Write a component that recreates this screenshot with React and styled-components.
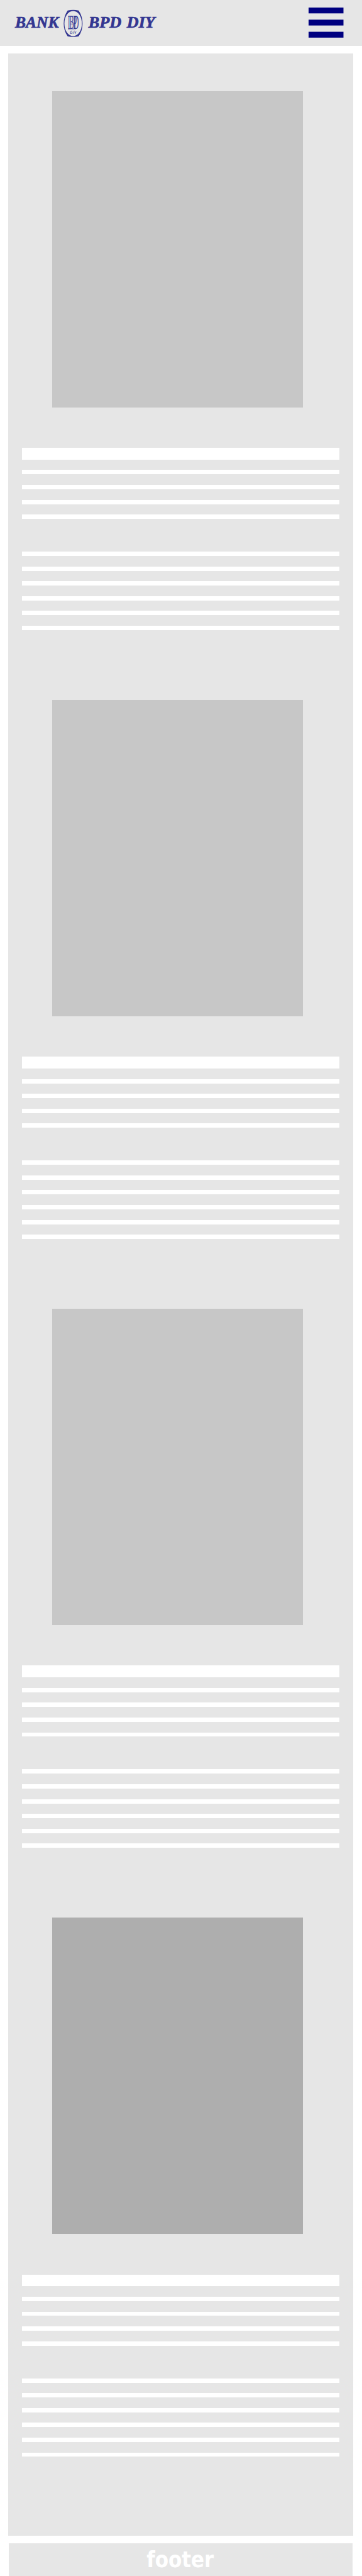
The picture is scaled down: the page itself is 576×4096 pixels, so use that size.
import React from "react";
import styled, { createGlobalStyle } from "styled-components";

const GlobalStyle = createGlobalStyle`
  * { box-sizing: border-box; }
  body { margin: 0; background: #fff; }
`;

const Page = styled.div`
  width: 576px;
  height: 4096px;
  display: flex;
  flex-direction: column;
  overflow: hidden;
`;

const Header = styled.header`
  flex: none;
  height: 72.5px;
  padding-right: 29.5px;
  display: flex;
  align-items: center;
  justify-content: space-between;
  background: #e6e6e6;
`;

const LogoSvg = styled.svg`
  display: block;
  width: 260.5px;
  height: 72.5px;
`;

const MenuButton = styled.button`
  border: 0;
  padding: 0;
  background: none;
`;

const MenuSvg = styled.svg`
  display: block;
  width: 55.5px;
  height: 48px;
`;

const Content = styled.main`
  flex: none;
  height: 3947px;
  margin: 12.5px 14px 0 13px;
  padding: 59.9px 22px 0 22.4px;
  background: #e6e6e6;
`;

const Article = styled.article`
  height: 968.2px;
`;

const Picture = styled.div`
  width: 399px;
  height: 502.9px;
  margin-left: 47.2px;
  background: ${({ $tone }) => $tone};
`;

const Title = styled.div`
  height: 18.8px;
  margin-top: 64.3px;
  background: #fff;
`;

const Paragraph = styled.div`
  display: flex;
  flex-direction: column;
  gap: 16.75px;
  margin-top: ${({ $space }) => $space}px;
`;

const Line = styled.div`
  height: 6.85px;
  background: #fff;
`;

const Footer = styled.footer`
  flex: 1;
  margin: 11.5px 15px 0 13.6px;
  display: flex;
  justify-content: center;
  background: #e6e6e6;
`;

const FooterLabel = styled.span`
  font: 700 36px/52px "DejaVu Sans", sans-serif;
  color: #fff;
  transform: translateX(-0.5px) scaleX(0.86);
`;

function Logo() {
  const word = {
    fontFamily: '"Liberation Serif", serif',
    fontWeight: 700,
    fontStyle: "italic",
    fontSize: 44.5,
    lengthAdjust: "spacingAndGlyphs",
    stroke: "#333691",
    strokeWidth: 1.3,
  };
  const mono = { fontFamily: '"Liberation Serif", serif', fontSize: 55 };
  return (
    <LogoSvg viewBox="0 0 460 128" fill="#333691" role="img" aria-label="Bank BPD DIY">
      <text x="42.5" y="78.5" textLength="122.5" {...word}>BANK</text>
      <path
        fillRule="evenodd"
        d="M190 29.5Q205.500 26.500 221 29.500Q232 46 232 66Q232 86 221 102Q205.500 105 190 102Q179 86 179 66Q179 46 190 29.500ZM205.500 31C191.500 31 181 46.500 181 66C181 85.500 191.500 101 205.500 101C219.500 101 230 85.500 230 66C230 46.500 219.500 31 205.500 31Z"
      />
      <g {...mono}>
        <text transform="translate(190.500 82) scale(.33 1)">I</text>
        <text transform="translate(195.500 82) scale(.32 1)">B</text>
        <text transform="translate(205.500 82) scale(.32 1)">P</text>
        <text transform="translate(207 82) scale(.36 1)">D</text>
      </g>
      <path
        fill="none"
        stroke="#333691"
        strokeWidth="1"
        d="M191 46q4 2 8 0t8 0t7 0M191 82.500q4-1 7 1t7 0M205 83.500q4 2 8-0.500M197 67.500h9"
      />
      <text x="196.800" y="94.700" textLength="17.500" fontSize="9" fontFamily='"Liberation Sans", sans-serif' stroke="#333691" strokeWidth=".3">DIY</text>
      <text x="248.500" y="78.5" textLength="92.500" {...word}>BPD</text>
      <text x="356.500" y="78.5" textLength="79" {...word}>DIY</text>
    </LogoSvg>
  );
}

function Menu() {
  return (
    <MenuButton aria-label="Menu">
      <MenuSvg viewBox="0 0 98 84.700" preserveAspectRatio="none" fill="#000080">
        <rect width="98" height="16.400" />
        <rect y="34" width="98" height="16.400" />
        <rect y="68" width="98" height="16.400" />
      </MenuSvg>
    </MenuButton>
  );
}

const lines = (count) => Array.from({ length: count }, (_, i) => <Line key={i} />);

const tones = ["#c7c7c7", "#c7c7c7", "#c7c7c7", "#aeaeae"];

export default function App() {
  return (
    <Page>
      <GlobalStyle />
      <Header>
        <Logo />
        <Menu />
      </Header>
      <Content>
        {tones.map((tone, i) => (
          <Article key={i}>
            <Picture $tone={tone} />
            <Title />
            <Paragraph $space={16.6}>{lines(4)}</Paragraph>
            <Paragraph $space={52}>{lines(6)}</Paragraph>
          </Article>
        ))}
      </Content>
      <Footer>
        <FooterLabel>footer</FooterLabel>
      </Footer>
    </Page>
  );
}
